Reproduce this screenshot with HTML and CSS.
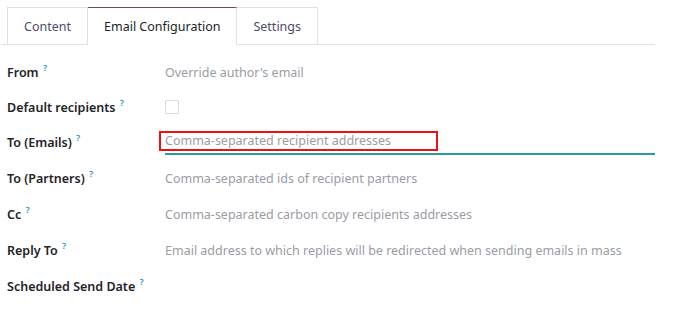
FILE: index.html
```html
<!DOCTYPE html>
<html lang="en">
<head>
    <meta charset="UTF-8">
    <meta name="viewport" content="width=device-width, initial-scale=1.0">
    <title>Email Configuration</title>
    <link rel="stylesheet" href="styles.css">
</head>
<body>
    <div class="notebook">
        <ul class="tabs">
            <li class="tab">Content</li>
            <li class="tab active">Email Configuration</li>
            <li class="tab">Settings</li>
        </ul>

        <div class="fields">
            <div class="field">
                <label>From <sup>?</sup></label>
                <span class="placeholder">Override author's email</span>
            </div>
            <div class="field short">
                <label>Default recipients <sup>?</sup></label>
                <span class="checkbox"></span>
            </div>
            <div class="field">
                <label>To (Emails) <sup>?</sup></label>
                <div class="input-wrap">
                    <span class="placeholder highlight">Comma-separated recipient addresses</span>
                </div>
            </div>
            <div class="field">
                <label>To (Partners) <sup>?</sup></label>
                <span class="placeholder">Comma-separated ids of recipient partners</span>
            </div>
            <div class="field">
                <label>Cc <sup>?</sup></label>
                <span class="placeholder">Comma-separated carbon copy recipients addresses</span>
            </div>
            <div class="field">
                <label>Reply To <sup>?</sup></label>
                <span class="placeholder">Email address to which replies will be redirected when sending emails in mass</span>
            </div>
            <div class="field">
                <label>Scheduled Send Date <sup>?</sup></label>
                <span class="placeholder"></span>
            </div>
        </div>
    </div>
</body>
</html>
```

FILE: styles.css
```css
body {
    margin: 0;
    background-color: white;
    font-family: "Noto Sans", "Open Sans", sans-serif;
    font-size: 12.5px;
    color: #212529;
}
.notebook {
    width: 654px;
    margin-left: 1px;
    padding-top: 7px;
}
.tabs {
    list-style: none;
    margin: 0;
    padding: 0 0 0 6px;
    display: flex;
    border-bottom: 1px solid #dee2e6;
}
.tab {
    height: 36px;
    line-height: 38px;
    padding: 0 16px;
    border: 1px solid #dee2e6;
    border-bottom: none;
    margin-bottom: -1px;
    color: #4c4c6a;
    background-color: white;
}
.tab + .tab {
    border-left: none;
}
.tab.active {
    border-top: 1px solid #714b67;
    border-bottom: 1px solid white;
    color: #212529;
}
.fields {
    padding: 9px 0 0 6px;
}
.field {
    display: grid;
    grid-template-columns: 158px 1fr;
    align-items: center;
    height: 36px;
}
.field.short {
    height: 34px;
}
label {
    font-weight: 600;
    color: #1f2328;
}
sup {
    color: #1a94c4;
    font-size: 9px;
    font-weight: 600;
    vertical-align: 6px;
    line-height: 0;
    margin-left: 1px;
}
.placeholder {
    color: #9a9ca5;
}
.checkbox {
    display: block;
    width: 12px;
    height: 12px;
    border: 1px solid #dcdcdc;
    border-radius: 1px;
}
.input-wrap {
    border-bottom: 2px solid #2a9c9f;
    height: 21px;
    margin-top: 2px;
}
.highlight {
    display: inline-block;
    margin-left: -6px;
    margin-top: -1px;
    padding: 0 4px;
    width: 267px;
    height: 16px;
    line-height: 16px;
    border: 2px solid #ee1111;
}
```
